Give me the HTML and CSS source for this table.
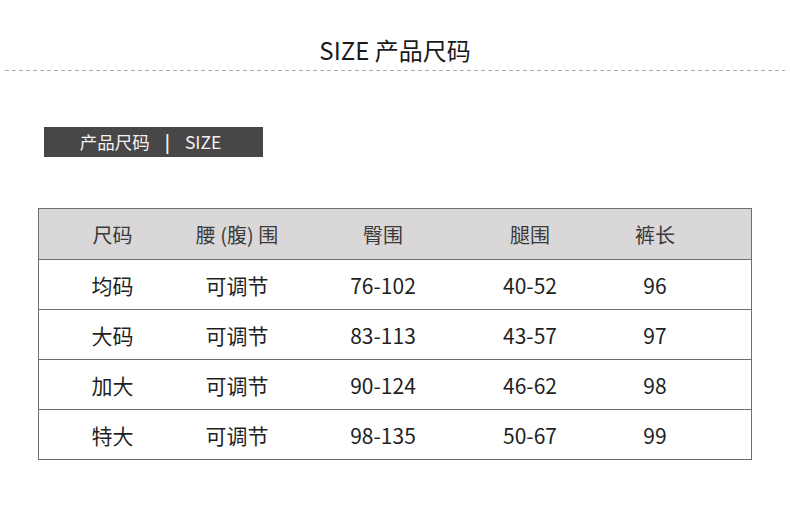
FILE: index.html
```html
<!DOCTYPE html>
<html lang="zh">
<head>
<meta charset="utf-8">
<link rel="stylesheet" href="styles.css">
</head>
<body>
<div class="page">
  <h1 class="title">SIZE 产品尺码</h1>
  <div class="dash"></div>
  <div class="label"><span>产品尺码</span><span class="bar">|</span><span>SIZE</span></div>
  <div class="table">
    <div class="row head">
      <div>尺码</div><div>腰 (腹) 围</div><div>臀围</div><div>腿围</div><div>裤长</div><div></div>
    </div>
    <div class="row">
      <div>均码</div><div>可调节</div><div>76-102</div><div>40-52</div><div>96</div><div></div>
    </div>
    <div class="row">
      <div>大码</div><div>可调节</div><div>83-113</div><div>43-57</div><div>97</div><div></div>
    </div>
    <div class="row">
      <div>加大</div><div>可调节</div><div>90-124</div><div>46-62</div><div>98</div><div></div>
    </div>
    <div class="row">
      <div>特大</div><div>可调节</div><div>98-135</div><div>50-67</div><div>99</div><div></div>
    </div>
  </div>
</div>
</body>
</html>
```
FILE: styles.css
```css
html, body {
  margin: 0;
  padding: 0;
  background: #ffffff;
}
body {
  font-family: "Noto Sans CJK SC", "Noto Sans", sans-serif;
  color: #222;
}
.page {
  width: 790px;
  height: 509px;
  padding-top: 35px;
  box-sizing: border-box;
}
.title {
  margin: 0;
  font-size: 24px;
  font-weight: 400;
  line-height: 30px;
  text-align: center;
  color: #1a1a1a;
}
.dash {
  margin: 5px 5px 0 5px;
  height: 1px;
  background: repeating-linear-gradient(to right, #a8a8a8 0 4px, transparent 4px 7px);
}
.label {
  margin: 56px 0 0 44px;
  width: 219px;
  height: 30px;
  background: #484647;
  color: #f2f2f2;
  font-size: 17.5px;
  line-height: 30px;
  display: flex;
  justify-content: center;
  gap: 15px;
  padding-right: 6px;
  box-sizing: border-box;
}
.label .bar {
  font-weight: 700;
}
.table {
  margin: 51px 0 0 38px;
  width: 714px;
  border: 1px solid #6f6f6f;
  box-sizing: border-box;
}
.row {
  display: grid;
  grid-template-columns: 147px 102px 190px 104px 146px 1fr;
  height: 50px;
  box-sizing: border-box;
  border-top: 1px solid #6f6f6f;
  align-items: center;
  font-size: 21px;
  color: #1f1f1f;
}
.row > div {
  text-align: center;
}
.row.head {
  border-top: none;
  height: 50px;
  background: #d9d7d8;
  font-size: 20px;
  color: #3a3a3a;
}
```
